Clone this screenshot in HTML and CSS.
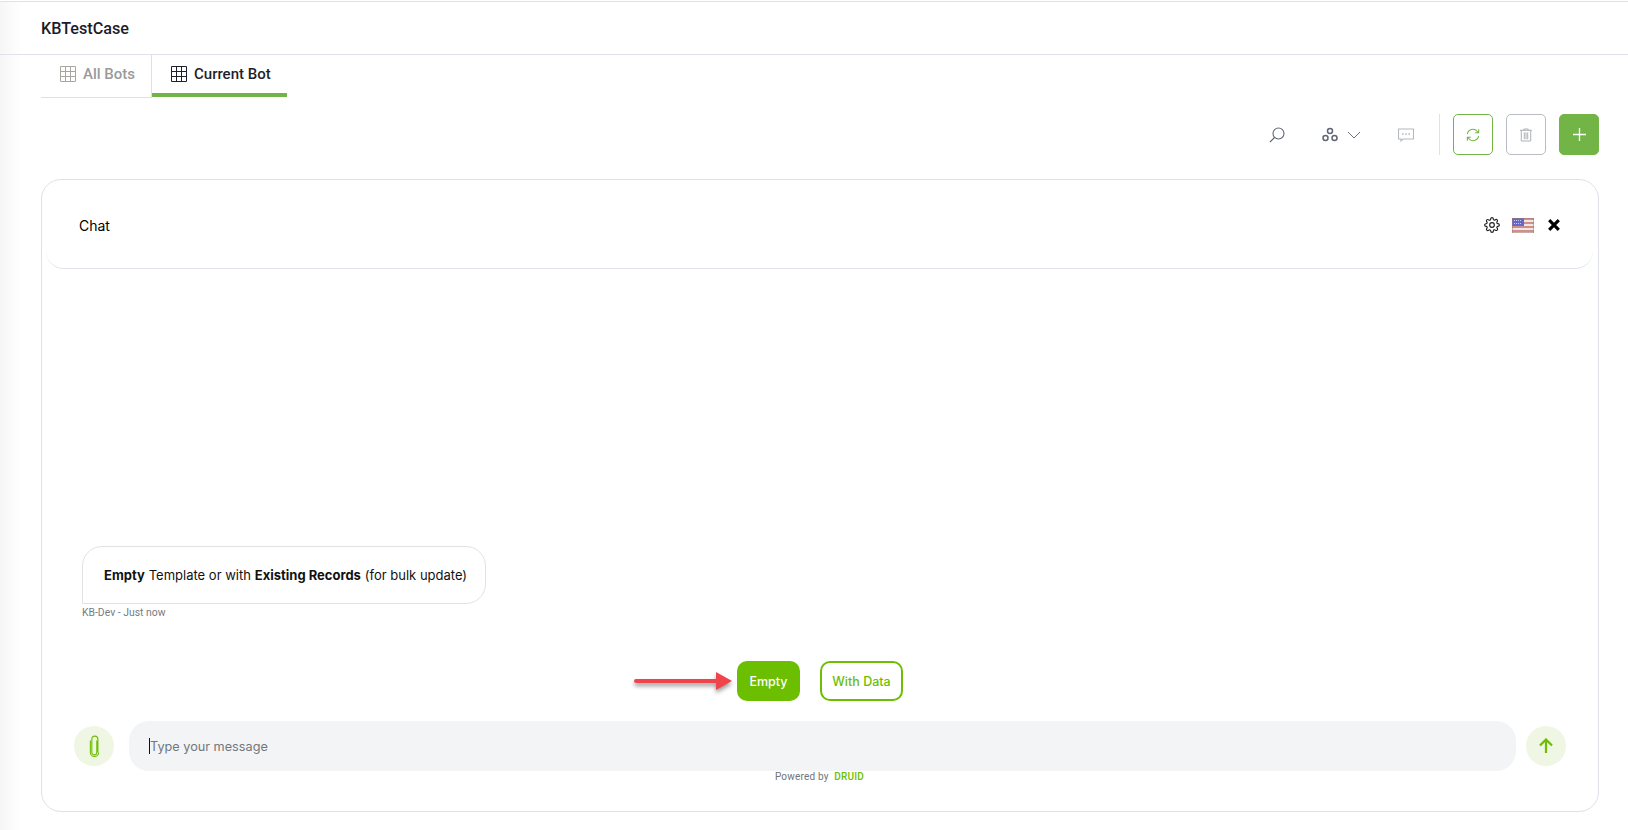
FILE: index.html
```html
<!DOCTYPE html>
<html>
    <head>
        <title>KBTestCase</title>
        <link rel="stylesheet" href="styles.css">
    </head>
    <body>
        <div class="page">
            <header class="page-header">KBTestCase</header>

            <div class="content">
                <nav class="tabs">
                    <div class="tab">
                        <svg class="grid-icon" viewBox="0 0 16 16"><path d="M.5.5h15v15H.5zM.5 5.5h15M.5 10.5h15M5.5.5v15M10.5.5v15"/></svg>
                        All Bots
                    </div>
                    <div class="tab tab-active">
                        <svg class="grid-icon" viewBox="0 0 16 16"><path d="M.5.5h15v15H.5zM.5 5.5h15M.5 10.5h15M5.5.5v15M10.5.5v15"/></svg>
                        Current Bot
                    </div>
                </nav>

                <div class="toolbar">
                    <svg class="tool-icon search-icon" viewBox="0 0 16 16"><circle cx="9.500" cy="6.500" r="5.500"/><path d="M5.500 10.500L1 15"/></svg>
                    <div class="tool-group">
                        <svg class="tool-icon group-icon" viewBox="0 0 16 16"><circle cx="8" cy="4" r="2.500"/><circle cx="3.500" cy="11" r="2.500"/><circle cx="12.500" cy="11" r="2.500"/></svg>
                        <svg class="chevron-icon" viewBox="0 0 14 8"><path d="M1 1l6 6 6-6"/></svg>
                    </div>
                    <svg class="tool-icon chat-icon" viewBox="0 0 16 16"><path d="M.5 2h15v10H5l-2 2v-2H.5z"/><path class="dots" d="M4 7h1.600M7.200 7h1.600M10.400 7H12"/></svg>
                    <div class="toolbar-divider"></div>
                    <button class="tool-button tool-refresh">
                        <svg viewBox="0 0 16 16"><path d="M1.500 7A6.500 6.500 0 0 1 13 4l1.500 1.500M14.500 1.500v4h-4"/><path d="M14.500 9A6.500 6.500 0 0 1 3 12l-1.500-1.500M1.500 14.500v-4h4"/></svg>
                    </button>
                    <button class="tool-button tool-delete">
                        <svg viewBox="0 0 14 16"><path d="M0 2.500h14M4.500 2.500V1h5v1.500M1.500 2.500V15h11V2.500M5 5v8M7 5v8M9 5v8"/></svg>
                    </button>
                    <button class="tool-button tool-add">
                        <svg viewBox="0 0 14 14"><path d="M7 0v14M0 7h14"/></svg>
                    </button>
                </div>

                <section class="chat-card">
                    <div class="chat-header">
                        <span class="chat-title">Chat</span>
                        <div class="chat-actions">
                            <svg class="gear-icon" viewBox="0 0 24 24"><circle cx="12" cy="12" r="3.500"/><path d="M19.400 15a1.650 1.650 0 0 0 .33 1.820l.06.06a2 2 0 0 1 0 2.830 2 2 0 0 1-2.830 0l-.06-.06a1.650 1.650 0 0 0-1.820-.33 1.650 1.650 0 0 0-1 1.510V21a2 2 0 0 1-2 2 2 2 0 0 1-2-2v-.09A1.650 1.650 0 0 0 9 19.400a1.650 1.650 0 0 0-1.820.33l-.06.06a2 2 0 0 1-2.830 0 2 2 0 0 1 0-2.830l.06-.06a1.650 1.650 0 0 0 .33-1.820 1.650 1.650 0 0 0-1.510-1H3a2 2 0 0 1-2-2 2 2 0 0 1 2-2h.09A1.650 1.650 0 0 0 4.600 9a1.650 1.650 0 0 0-.33-1.820l-.06-.06a2 2 0 0 1 0-2.830 2 2 0 0 1 2.830 0l.06.06a1.650 1.650 0 0 0 1.820.33H9a1.650 1.650 0 0 0 1-1.510V3a2 2 0 0 1 2-2 2 2 0 0 1 2 2v.09a1.650 1.650 0 0 0 1 1.510 1.650 1.650 0 0 0 1.820-.33l.06-.06a2 2 0 0 1 2.830 0 2 2 0 0 1 0 2.830l-.06.06a1.650 1.650 0 0 0-.33 1.820V9a1.650 1.650 0 0 0 1.510 1H21a2 2 0 0 1 2 2 2 2 0 0 1-2 2h-.09a1.650 1.650 0 0 0-1.510 1z"/></svg>
                            <svg class="flag-icon" viewBox="0 0 22 15">
                                <rect width="22" height="15" fill="#ece6e4"/>
                                <path d="M0 1h22M0 5h22M0 9h22M0 13h22" stroke="#c8736f" stroke-width="1.500"/>
                                <rect width="12" height="8" fill="#6169cc"/>
                                <path d="M2 2.500h8M2 5.500h8" stroke="#c9cdf0" stroke-width="1" stroke-dasharray="1 1"/>
                                <rect x=".25" y=".25" width="21.500" height="14.500" fill="none" stroke="#a5756f" stroke-width=".5"/>
                            </svg>
                            <svg class="close-icon" viewBox="0 0 10 10"><path d="M1 1l8 8M9 1l-8 8"/></svg>
                        </div>
                    </div>

                    <div class="messages">
                        <div class="bubble"><b>Empty</b> Template or with <b>Existing Records</b> (for bulk update)</div>
                        <div class="bubble-meta">KB-Dev - Just now</div>
                    </div>

                    <div class="quick-replies">
                        <div class="reply-wrap">
                            <svg class="arrow-note" viewBox="0 0 100 24">
                                <path d="M2 12H84" stroke="#f0444a" stroke-width="4" stroke-linecap="round"/>
                                <path d="M82 3l16 9-16 9z" fill="#f0444a"/>
                            </svg>
                            <button class="reply reply-solid">Empty</button>
                        </div>
                        <button class="reply reply-outline">With Data</button>
                    </div>

                    <div class="composer">
                        <button class="round-button">
                            <svg class="clip-icon" viewBox="0 0 12 24"><path d="M8.500 6v13a2.700 2.700 0 0 1-5.400 0V4.500a3.300 3.300 0 0 1 6.600 0V19"/><path d="M1.500 6v13a4.500 4.500 0 0 0 9 0"/></svg>
                        </button>
                        <div class="message-input"><span class="caret"></span>Type your message</div>
                        <button class="round-button">
                            <svg class="send-icon" viewBox="0 0 14 16"><path d="M7 15V1.500M1 7.500l6-6 6 6"/></svg>
                        </button>
                    </div>
                    <div class="powered">Powered by <span class="powered-brand">DRUID</span></div>
                </section>
            </div>
        </div>
    </body>
</html>
```

FILE: styles.css
```css
* {
    box-sizing: border-box;
}
html,
body {
    height: 100%;
}
body {
    margin: 0;
    font-family: Roboto, Arial, sans-serif;
    background: white;
    overflow: hidden;
}
.page {
    height: 829px;
    border-top: 1px solid #dfe2e8;
    margin-top: 1px;
    background: linear-gradient(to right, #f6f6f6, #ffffff 22px);
}
.page-header {
    height: 53px;
    padding: 0 41px;
    display: flex;
    align-items: center;
    font-size: 16.200px;
    font-weight: 500;
    color: #1a1c2e;
    border-bottom: 1px solid #dfe2e8;
}
.content {
    padding: 0 29px 0 41px;
}
.tabs {
    display: flex;
    align-items: flex-start;
    height: 43px;
}
.tab {
    display: flex;
    align-items: center;
    gap: 7px;
    height: 43px;
    padding: 0 0 4px 19px;
    width: 111px;
    font-size: 15px;
    font-weight: 500;
    white-space: nowrap;
    color: #9a9a9a;
    border-right: 1px solid #e0e0e4;
    border-bottom: 1px solid #e0e0e4;
}
.tab .grid-icon {
    stroke: #a8a4a0;
}
.tab-active {
    width: 135px;
    height: 42px;
    flex: none;
    padding: 0 0 0 19px;
    color: #1f1f2b;
    border-right: none;
    border-bottom: 4px solid #72b546;
}
.tab-active .grid-icon {
    stroke: #1f1f2b;
}
.grid-icon {
    width: 16px;
    height: 16px;
    flex: none;
    fill: none;
    stroke-width: 1;
}
.toolbar {
    display: flex;
    align-items: center;
    justify-content: flex-end;
    height: 41px;
    margin-top: 16px;
}
.tool-icon {
    fill: none;
    stroke: #5f6672;
    stroke-width: 1.100;
    width: 16px;
    height: 16px;
}
.search-icon {
    margin-right: 37px;
}
.tool-group {
    display: flex;
    align-items: center;
    gap: 9px;
    margin-right: 37px;
}
.group-icon {
    stroke-width: 1.500;
}
.chevron-icon {
    width: 14px;
    height: 8px;
    fill: none;
    stroke: #6b7280;
    stroke-width: 1;
}
.chat-icon {
    stroke: #b5b8bd;
}
.chat-icon .dots {
    stroke-width: 1.400;
}
.toolbar-divider {
    width: 1px;
    height: 41px;
    background: #e0e2e6;
    margin: 0 13px 0 25px;
}
.tool-button {
    width: 40px;
    height: 41px;
    padding: 0;
    margin-left: 13px;
    border-radius: 5px;
    display: flex;
    align-items: center;
    justify-content: center;
    background: white;
    border: 1px solid #b9bcc2;
}
.tool-button:first-of-type {
    margin-left: 0;
}
.tool-button svg {
    fill: none;
}
.tool-refresh {
    border-color: #72b546;
}
.tool-refresh svg {
    width: 14px;
    height: 14px;
    stroke: #72b546;
    stroke-width: 1.200;
}
.tool-delete svg {
    width: 12px;
    height: 14px;
    stroke: #a9acb0;
    stroke-width: 1.100;
}
.tool-add {
    background: #72b546;
    border-color: #72b546;
}
.tool-add svg {
    width: 13px;
    height: 13px;
    stroke: white;
    stroke-width: 1.400;
}
.chat-card {
    height: 633px;
    margin-top: 24px;
    padding-bottom: 28px;
    border: 1px solid #dfe1ea;
    border-radius: 20px;
    display: flex;
    flex-direction: column;
    background: white;
}
.chat-header {
    height: 89px;
    margin: 0 5px 0 4px;
    padding: 2px 33px 0 33px;
    flex: none;
    display: flex;
    align-items: center;
    justify-content: space-between;
    border-bottom: 1px solid #e2e4ec;
    border-radius: 0 0 18px 18px;
}
.chat-title {
    font-family: Inter, Arial, sans-serif;
    font-size: 14px;
    color: #000;
}
.chat-actions {
    display: flex;
    align-items: center;
}
.gear-icon {
    width: 16px;
    height: 16px;
    fill: none;
    stroke: #222;
    stroke-width: 1.700;
    margin-right: 12px;
}
.flag-icon {
    width: 22px;
    height: 15px;
    margin-right: 14px;
}
.close-icon {
    width: 12px;
    height: 12px;
    fill: none;
    stroke: #000;
    stroke-width: 2.600;
}
.messages {
    flex: 1;
    display: flex;
    flex-direction: column;
    justify-content: flex-end;
    align-items: flex-start;
    padding-left: 40px;
}
.bubble {
    width: 404px;
    height: 58px;
    display: flex;
    align-items: center;
    gap: 0.3em;
    padding-left: 21px;
    font-family: Inter, Arial, sans-serif;
    font-size: 13px;
    color: #111;
    border: 1px solid #e2e2e6;
    border-radius: 20px 20px 20px 0;
}
.bubble b {
    font-weight: 700;
}
.bubble-meta {
    margin-top: 3px;
    height: 12px;
    line-height: 12px;
    font-size: 10.400px;
    color: #777b82;
}
.quick-replies {
    margin-top: 42px;
    display: flex;
    justify-content: center;
    gap: 20px;
}
.reply-wrap {
    position: relative;
}
.arrow-note {
    position: absolute;
    right: 100%;
    top: 8px;
    width: 100px;
    height: 24px;
    margin-right: 3px;
    filter: drop-shadow(0 3px 2px rgba(0, 0, 0, 0.4));
}
.reply {
    height: 40px;
    border-radius: 10px;
    font-family: Inter, Arial, sans-serif;
    font-size: 12.500px;
    font-weight: 500;
    padding: 0;
}
.reply-solid {
    width: 63px;
    background: #6cbe00;
    border: none;
    color: white;
}
.reply-outline {
    width: 83px;
    background: white;
    border: 2px solid #6cbe00;
    color: #6cbe00;
}
.composer {
    margin-top: 20px;
    padding: 0 32px 0 32px;
    display: flex;
    align-items: center;
}
.round-button {
    width: 40px;
    height: 40px;
    flex: none;
    padding: 0;
    border: none;
    border-radius: 50%;
    background: #eff6e3;
    display: flex;
    align-items: center;
    justify-content: center;
}
.clip-icon {
    width: 11px;
    height: 24px;
    fill: none;
    stroke: #6cbe00;
    stroke-width: 1.200;
}
.send-icon {
    width: 14px;
    height: 16px;
    fill: none;
    stroke: #6cbe00;
    stroke-width: 2.200;
}
.message-input {
    flex: 1;
    height: 50px;
    margin: 0 10px 0 15px;
    padding-left: 20px;
    display: flex;
    align-items: center;
    font-family: Inter, Arial, sans-serif;
    font-size: 12.700px;
    color: #72777f;
    background: #f3f4f6;
    border-radius: 20px;
}
.caret {
    width: 1px;
    height: 16px;
    background: #111;
}
.powered {
    text-align: center;
    padding-right: 1px;
    font-size: 10px;
    line-height: 12px;
    letter-spacing: 0.2px;
    color: #6f737a;
}
.powered-brand {
    margin-left: 3px;
    font-weight: 500;
    color: #6cbe00;
}
```
